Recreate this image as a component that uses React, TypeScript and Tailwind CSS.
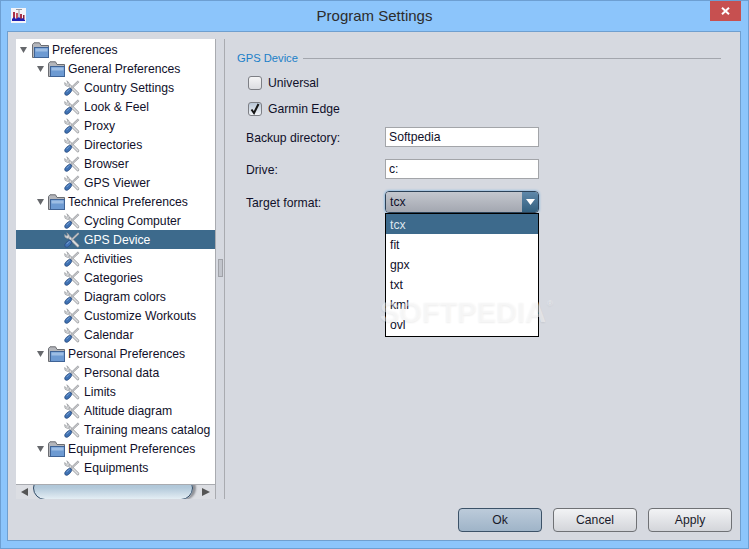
const font = { fontFamily: '"Liberation Sans", Arial, sans-serif' };

function Arrow() {
  return (
    <svg width="7" height="6" viewBox="0 0 7 6" className="shrink-0">
      <path d="M0 0H7L3.5 6Z" fill="#66686c" />
    </svg>
  );
}

function Folder() {
  return (
    <svg width="17" height="16" viewBox="0 0 17 16" className="shrink-0">
      <path d="M0.5 2.5V15.5H16.5V3.5H9L7.5 0.8H2Z" fill="#b4b6bb" stroke="#6b6d72" />
      <rect x="2.5" y="5.5" width="14" height="10" fill="#6d9ad2" stroke="#3f6396" />
      <rect x="3.5" y="6.5" width="12" height="3" fill="#9dbde4" />
    </svg>
  );
}

function Tools() {
  return (
    <svg width="16" height="16" viewBox="0 0 16 16" className="shrink-0">
      <path d="M13.8 13.8 5.5 5.5" stroke="#9a9ca0" strokeWidth="3" strokeLinecap="round" />
      <path d="M13.8 13.8 5.5 5.5" stroke="#e0e1e3" strokeWidth="1.6" strokeLinecap="round" />
      <path d="M2.8 0.8 5 2.8 5.5 5.5 3.5 6.5 1 5.2 0.6 2.6 2.6 4 3.8 3Z" fill="#d4d5d7" stroke="#9a9ca0" strokeWidth="0.7" />
      <path d="M14.6 1.2 7.5 8" stroke="#9a9ca0" strokeWidth="2.2" />
      <path d="M14.6 1.2 7.5 8" stroke="#dcdde0" strokeWidth="0.9" />
      <ellipse cx="4.2" cy="11.8" rx="4.3" ry="2.3" transform="rotate(-45 4.2 11.8)" fill="#3f72b4" stroke="#2a4a7c" strokeWidth="0.7" />
      <path d="M2.5 12.2 5.5 9.2" stroke="#8fb4e0" strokeWidth="0.8" />
    </svg>
  );
}

type Row = { label: string; level: number; selected?: boolean };

const rows: Row[] = [
  { label: "Preferences", level: 0 },
  { label: "General Preferences", level: 1 },
  { label: "Country Settings", level: 2 },
  { label: "Look & Feel", level: 2 },
  { label: "Proxy", level: 2 },
  { label: "Directories", level: 2 },
  { label: "Browser", level: 2 },
  { label: "GPS Viewer", level: 2 },
  { label: "Technical Preferences", level: 1 },
  { label: "Cycling Computer", level: 2 },
  { label: "GPS Device", level: 2, selected: true },
  { label: "Activities", level: 2 },
  { label: "Categories", level: 2 },
  { label: "Diagram colors", level: 2 },
  { label: "Customize Workouts", level: 2 },
  { label: "Calendar", level: 2 },
  { label: "Personal Preferences", level: 1 },
  { label: "Personal data", level: 2 },
  { label: "Limits", level: 2 },
  { label: "Altitude diagram", level: 2 },
  { label: "Training means catalog", level: 2 },
  { label: "Equipment Preferences", level: 1 },
  { label: "Equipments", level: 2 },
];

function TreeRow({ row }: { row: Row }) {
  if (row.level === 2) {
    return (
      <div className={`flex h-[19px] items-center whitespace-nowrap pl-[48px] ${row.selected ? "bg-[#3d6a8c] text-white" : "text-[#10102a]"}`}>
        <Tools />
        <span className="ml-[4px] pt-[2px]">{row.label}</span>
      </div>
    );
  }
  return (
    <div className={`flex h-[19px] items-center whitespace-nowrap text-[#10102a] ${row.level === 0 ? "pl-[4px]" : "pl-[21px]"}`}>
      <Arrow />
      <span className={`flex ${row.level === 0 ? "ml-[5px]" : "ml-[4px]"}`}>
        <Folder />
      </span>
      <span className="ml-[3px] pt-[2px]">{row.label}</span>
    </div>
  );
}

function Check({ checked, label }: { checked?: boolean; label: string }) {
  return (
    <div className="flex h-[26px] items-center pl-[11px]">
      <div className={`flex h-[14px] w-[14px] items-center justify-center rounded-[3px] border border-[#7d7f85] ${checked ? "bg-gradient-to-b from-[#b8c6d6] to-[#f2f4f7]" : "bg-gradient-to-b from-[#f5f5f6] to-[#dcdde1]"}`}>
        {checked && (
          <svg width="12" height="12" viewBox="0 0 12 12">
            <path d="M2.5 6.5 5 10 9.5 1" fill="none" stroke="#151515" strokeWidth="2" />
          </svg>
        )}
      </div>
      <span className="ml-[6px] text-[#10102a]">{label}</span>
    </div>
  );
}

function Field({ label, value, className }: { label: string; value: string; className: string }) {
  return (
    <div className={`flex h-[20px] items-center pl-[9px] ${className}`}>
      <span className="w-[139px] pt-[2px] text-[#10102a]">{label}</span>
      <div className="flex h-[20px] w-[154px] items-center border border-[#a3a5a9] bg-white pl-[3px] pt-[1px] text-[#10102a]">{value}</div>
    </div>
  );
}

function Btn({ label, primary }: { label: string; primary?: boolean }) {
  return (
    <div className={`flex h-[24px] w-[84px] items-center justify-center rounded-[4px] border text-[#1a1a2a] ${primary ? "border-[#3c5268] bg-gradient-to-b from-[#bccbda] to-[#9fb4c8]" : "border-[#6f7175] bg-gradient-to-b from-[#f2f3f5] to-[#d3d5da]"}`}>
      {label}
    </div>
  );
}

export default function App() {
  return (
    <div style={font} className="relative flex h-[549px] w-[749px] flex-col overflow-hidden border border-[#6d9fd2] bg-[#8cc5fb] text-[12.2px]">
      <div className="relative flex h-[30px] shrink-0 items-start">
        <svg width="15" height="15" viewBox="0 0 15 15" className="ml-[10px] mt-[7px] shrink-0">
          <rect width="15" height="15" fill="#f4f4f8" />
          <rect x="5" y="1" width="6" height="1" fill="#9a9aa0" />
          <rect x="7.5" y="1" width="1" height="8" fill="#9a9aa0" />
          <rect x="2" y="4" width="2" height="7" fill="#a83048" />
          <rect x="5" y="5" width="2" height="6" fill="#c05060" />
          <rect x="9" y="6" width="2" height="5" fill="#a83048" />
          <rect x="12" y="7" width="1.5" height="4" fill="#8a2040" />
          <path d="M1 13V11L3 9 5 11 8 9 10 11 12 10 14 12V13Z" fill="#2020b0" />
        </svg>
        <div className="flex-1 pr-[25px] pt-[6px] text-center text-[15px] leading-[18px] text-[#2c2c2c]">Program Settings</div>
        <div className="absolute right-[7px] top-0 flex h-[20px] w-[31px] items-center justify-center bg-[#c75050]">
          <svg width="9" height="8" viewBox="0 0 9 8">
            <path d="M1 0.8 8 7.2M8 0.8 1 7.2" stroke="#fff" strokeWidth="2" />
          </svg>
        </div>
      </div>

      <div className="ml-[6px] mr-[7px] mb-[7px] flex min-h-0 flex-1 flex-col border border-[#6f9fcf] bg-[#d6d9e0]">
        <div className="flex h-[467px] shrink-0 pl-[8px] pt-[7px]">
          <div className="flex w-[199px] shrink-0 flex-col overflow-hidden bg-white">
            <div className="flex-1 overflow-hidden pt-[1px]">
              {rows.map((r) => (
                <TreeRow key={r.label} row={r} />
              ))}
            </div>
            <div className="flex h-[15px] shrink-0 items-center overflow-hidden border-t border-[#a9abb0] bg-[#dcdee3]">
              <svg width="8" height="8" viewBox="0 0 8 8" className="ml-[5px] shrink-0">
                <path d="M7 0V8L0 4Z" fill="#555" />
              </svg>
              <div className="ml-[4px] h-[24px] w-[160px] -translate-y-[4px] shrink-0 rounded-[13px] border border-[#2f4a66] bg-gradient-to-b from-[#a4bccf] via-[#b4cadb] to-[#e4eef4] shadow-[3px_0_2px_#8f9197]" />
              <svg width="8" height="8" viewBox="0 0 8 8" className="ml-[9px] shrink-0">
                <path d="M0 0V8L8 4Z" fill="#555" />
              </svg>
            </div>
          </div>
          <div className="flex w-[10px] shrink-0 items-center justify-center border-l border-r border-[#a9abb0] pb-[3px]">
            <div className="h-[18px] w-[5px] border border-[#a0a2a8] bg-[#c2c5cc]" />
          </div>
          <div className="relative min-w-0 flex-1 pl-[12px] pr-[19px] pt-[12px]">
            <div className="flex h-[14px] items-center">
              <span className="text-[11.2px] text-[#1a7fc8]">GPS Device</span>
              <div className="ml-[5px] h-px flex-1 bg-[#a3a6ad]" />
            </div>
            <div className="mt-[5px]">
              <Check label="Universal" />
              <Check checked label="Garmin Edge" />
            </div>
            <Field label="Backup directory:" value="Softpedia" className="mt-[5px]" />
            <Field label="Drive:" value="c:" className="mt-[12px]" />
            <div className="mt-[12px] flex h-[22px] items-center pl-[9px]">
              <span className="w-[139px] pt-[2px] text-[#10102a]">Target format:</span>
              <div className="relative flex h-[22px] w-[154px] overflow-visible rounded-[4px] border border-[#2c4258] shadow-[0_0_2px_1px_#9cc0e0]">
                <div className="flex flex-1 items-center rounded-l-[3px] bg-gradient-to-b from-[#c4c7ce] to-[#a3a7b0] pl-[4px] pt-[1px] text-[#10102a]">tcx</div>
                <div className="flex w-[16px] items-center justify-center rounded-r-[3px] bg-gradient-to-b from-[#5f88aa] to-[#33607f]">
                  <svg width="9" height="6" viewBox="0 0 9 6">
                    <path d="M0 0H9L4.5 6Z" fill="#fff" />
                  </svg>
                </div>
                <div className="absolute left-[-1px] top-[21px] z-10 h-[124px] w-[154px] border border-black bg-white text-[#10102a]">
                  {["tcx", "fit", "gpx", "txt", "kml", "ovl"].map((o, i) => (
                    <div key={o} className={`flex h-[20px] items-center pl-[4px] pt-[2px] ${i === 0 ? "bg-[#3d6a8c] text-[#dfe6ec]" : ""}`}>
                      {o}
                    </div>
                  ))}
                </div>
              </div>
            </div>
            <div className="pointer-events-none absolute left-[155px] top-[255px] z-20 whitespace-nowrap text-[29px] font-bold leading-[36px] text-white/45 [text-shadow:0_1px_2px_rgba(0,0,0,0.07)]">
              SOFTPEDIA<span className="ml-[1px] align-top text-[8px] leading-[20px]">®</span>
            </div>
          </div>
        </div>
        <div className="flex flex-1 items-start justify-end gap-[11px] pr-[8px] pt-[9px]">
          <Btn primary label="Ok" />
          <Btn label="Cancel" />
          <Btn label="Apply" />
        </div>
      </div>
    </div>
  );
}
